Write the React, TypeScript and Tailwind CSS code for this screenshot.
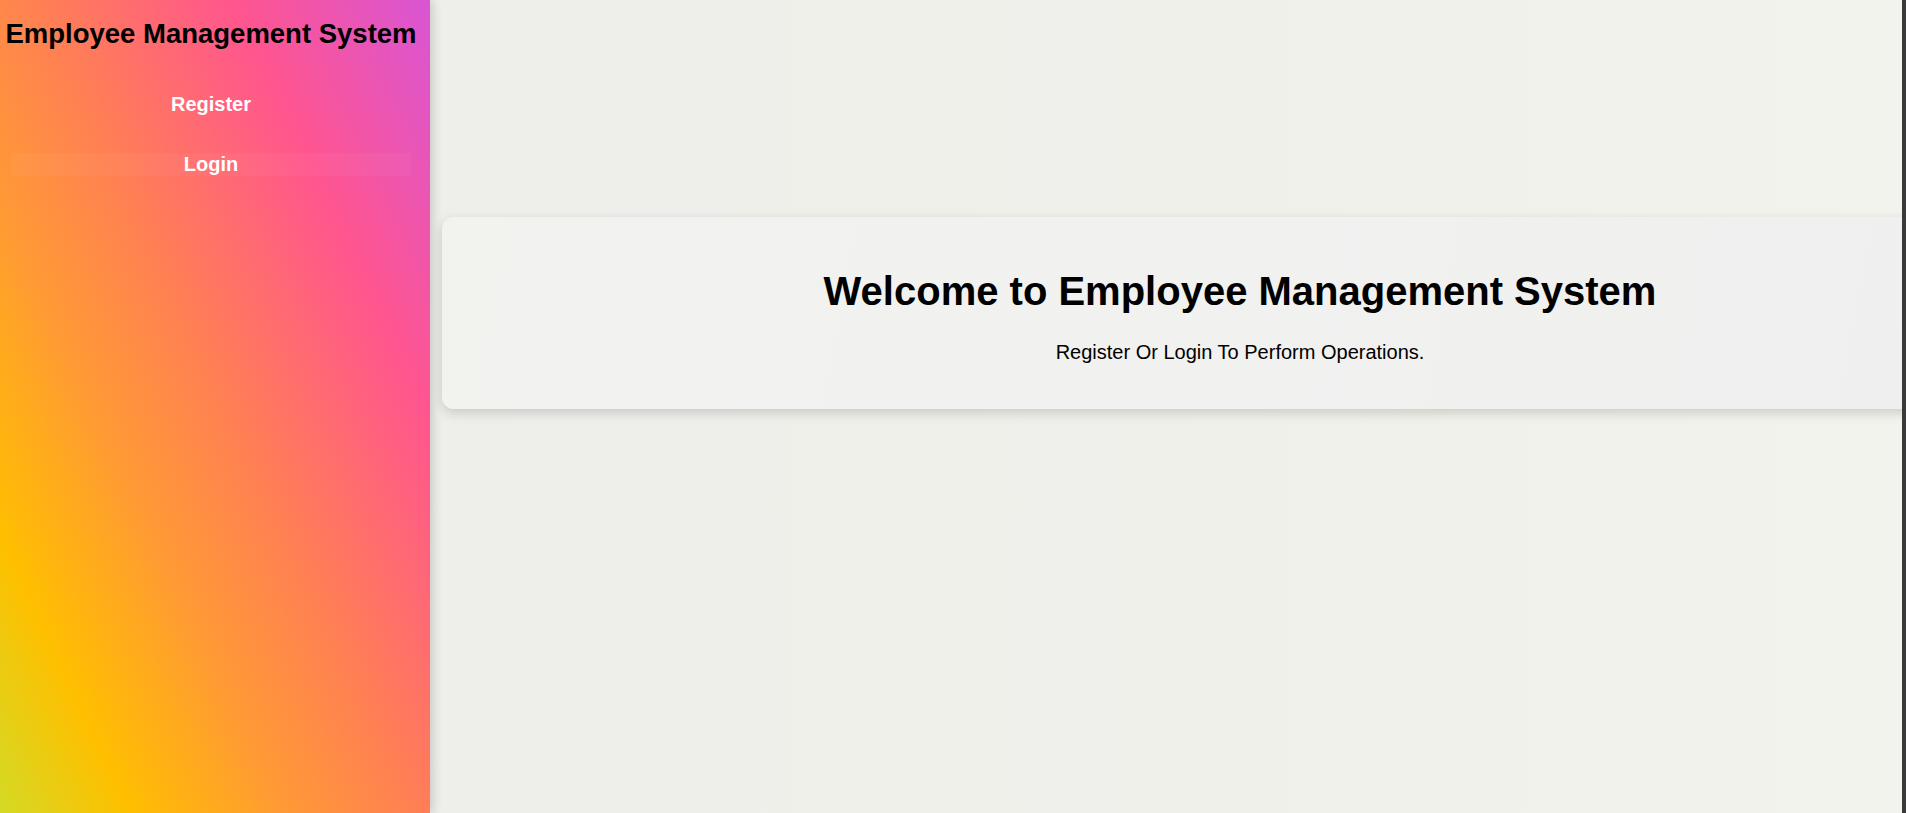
import React from "react";

export default function App() {
  return (
    <div className="flex h-[813px] w-[1906px] overflow-hidden font-['Liberation_Sans',Arial,sans-serif]">
      <aside className="relative z-10 flex h-full w-[430px] shrink-0 flex-col items-center pr-[8px] pt-[18px] shadow-[2px_0_10px_rgba(0,0,0,0.18)] bg-[linear-gradient(65deg,#d4da25_0%,#ffbf00_16%,#ff9a35_35%,#ff7f55_52%,#ff5590_76%,#d955d4_100%)]">
        <h2 className="whitespace-nowrap text-center text-[27.5px] font-bold leading-[32px] text-black">
          Employee Management System
        </h2>
        <a className="mt-[43px] block w-[400px] text-center text-[20px] font-bold leading-[23px] text-white">
          Register
        </a>
        <a className="mt-[37px] block w-[400px] bg-[rgba(255,255,255,0.04)] text-center text-[20px] font-bold leading-[23px] text-white">
          Login
        </a>
      </aside>
      <main className="h-full flex-1 overflow-hidden bg-[linear-gradient(90deg,#eeeeea_0%,#f0f0eb_50%,#f3f3ed_100%)] pl-[12px] pt-[217px]">
        <div className="w-[1596px] rounded-[12px] bg-[linear-gradient(100deg,#f2f2ef_0%,#f1f1f0_50%,#efefef_100%)] pb-[45px] pt-[51px] text-center shadow-[0_4px_12px_rgba(0,0,0,0.16)]">
          <h1 className="text-[40px] font-bold leading-[46px] text-black">
            Welcome to Employee Management System
          </h1>
          <p className="mt-[27px] text-[20px] leading-[23px] text-black">
            Register Or Login To Perform Operations.
          </p>
        </div>
      </main>
      <div className="h-full w-[4px] shrink-0 bg-[#3a3a3a]" />
    </div>
  );
}
